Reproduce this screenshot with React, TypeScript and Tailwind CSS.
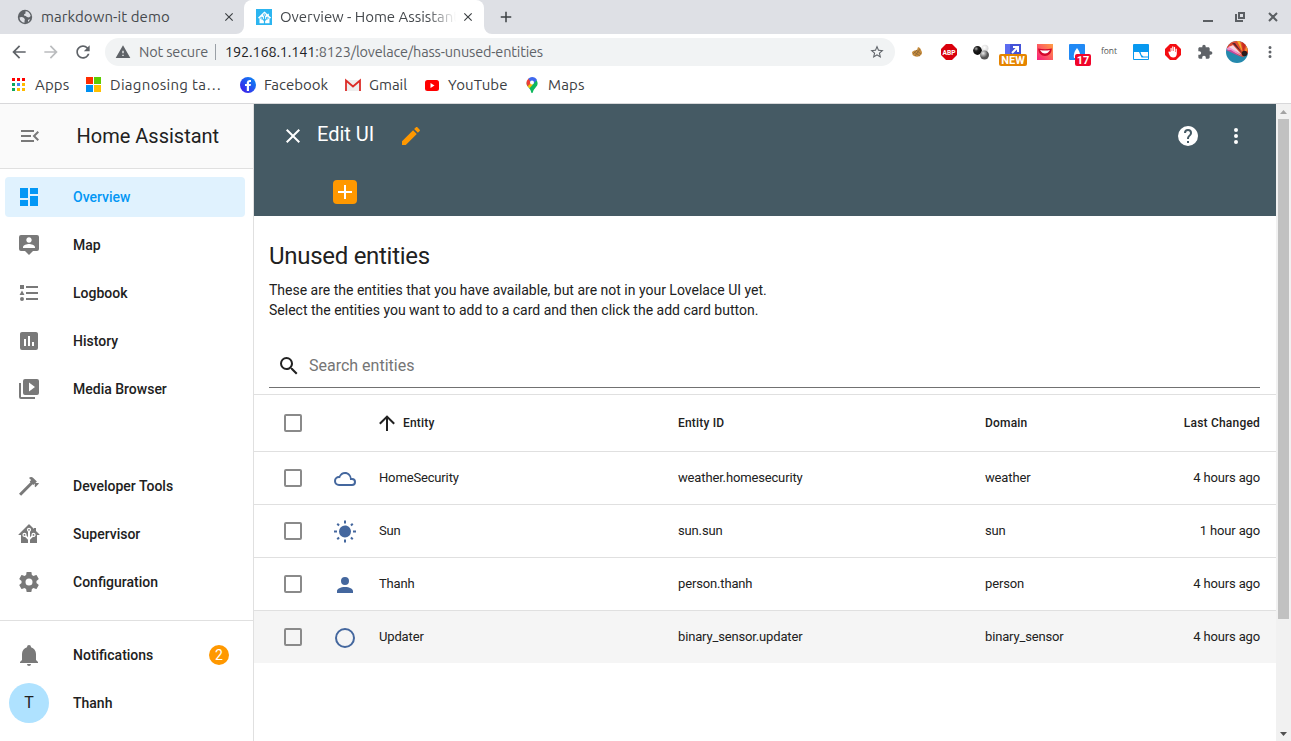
import type { ReactNode } from "react";

const mdi = {
  menuOpen: "M21,15.61L19.59,17L14.58,12L19.59,7L21,8.39L17.44,12L21,15.61M3,6H16V8H3V6M3,13V11H13V13H3M3,18V16H16V18H3Z",
  dashboard: "M13,3V9H21V3M13,21H21V11H13M3,21H11V15H3M3,13H11V3H3V13Z",
  tooltipAccount:
    "M20,2H4A2,2 0 0,0 2,4V16A2,2 0 0,0 4,18H8L12,22L16,18H20A2,2 0 0,0 22,16V4A2,2 0 0,0 20,2M12,4.3C13.5,4.3 14.7,5.5 14.7,7C14.7,8.5 13.5,9.7 12,9.7C10.5,9.7 9.3,8.5 9.3,7C9.3,5.5 10.5,4.3 12,4.3M18,15H6V14.1C6,12.1 10,11 12,11C14,11 18,12.1 18,14.1V15Z",
  list: "M5,9.5L7.5,14H2.5L5,9.5M3,4H7V8H3V4M5,20A2,2 0 0,0 7,18A2,2 0 0,0 5,16A2,2 0 0,0 3,18A2,2 0 0,0 5,20M9,5V7H21V5H9M9,19H21V17H9V19M9,13H21V11H9V13Z",
  pollBox: "M17,17H15V13H17M13,17H11V7H13M9,17H7V10H9M19,3H5C3.89,3 3,3.89 3,5V19A2,2 0 0,0 5,21H19A2,2 0 0,0 21,19V5C21,3.89 20.1,3 19,3Z",
  playBox: "M4,6H2V20A2,2 0 0,0 4,22H18V20H4V6M20,2H8A2,2 0 0,0 6,4V16A2,2 0 0,0 8,18H20A2,2 0 0,0 22,16V4A2,2 0 0,0 20,2M12,14.5V5.5L18,10L12,14.5Z",
  hammer:
    "M2,19.63L13.43,8.2L12.72,7.5L14.14,6.07L12,3.89C13.2,2.7 15.09,2.7 16.27,3.89L19.87,7.5L18.45,8.91H21.29L22,9.62L18.45,13.21L17.74,12.5V9.62L16.27,11.04L15.56,10.33L4.13,21.76L2,19.63Z",
  homeAssistant:
    "M21.8,13H20V21H13V17.67L15.79,14.88L16.5,15C17.66,15 18.6,14.06 18.6,12.9C18.6,11.74 17.66,10.8 16.5,10.8A2.1,2.1 0 0,0 14.4,12.9L14.5,13.61L13,15.13V9.65C13.66,9.29 14.1,8.6 14.1,7.8A2.1,2.1 0 0,0 12,5.7A2.1,2.1 0 0,0 9.9,7.8C9.9,8.6 10.34,9.29 11,9.65V15.13L9.5,13.61L9.6,12.9A2.1,2.1 0 0,0 7.5,10.8A2.1,2.1 0 0,0 5.4,12.9A2.1,2.1 0 0,0 7.5,15L8.21,14.88L11,17.67V21H4V13H2.25C1.83,13 1.42,13 1.42,12.79C1.43,12.57 1.85,12.15 2.28,11.72L11,3C11.33,2.67 11.67,2.33 12,2.33C12.33,2.33 12.67,2.67 13,3L17,7V6H19V9L21.78,11.78C22.18,12.18 22.59,12.59 22.6,12.8C22.6,13 22.2,13 21.8,13M7.5,12A0.9,0.9 0 0,1 8.4,12.9A0.9,0.9 0 0,1 7.5,13.8A0.9,0.9 0 0,1 6.6,12.9A0.9,0.9 0 0,1 7.5,12M16.5,12C17,12 17.4,12.4 17.4,12.9C17.4,13.4 17,13.8 16.5,13.8A0.9,0.9 0 0,1 15.6,12.9A0.9,0.9 0 0,1 16.5,12M12,6.9C12.5,6.9 12.9,7.3 12.9,7.8C12.9,8.3 12.5,8.7 12,8.7C11.5,8.7 11.1,8.3 11.1,7.8C11.1,7.3 11.5,6.9 12,6.9Z",
  cog: "M12,15.5A3.5,3.5 0 0,1 8.5,12A3.5,3.5 0 0,1 12,8.5A3.5,3.5 0 0,1 15.5,12A3.5,3.5 0 0,1 12,15.5M19.43,12.97C19.47,12.65 19.5,12.33 19.5,12C19.5,11.67 19.47,11.34 19.43,11L21.54,9.37C21.73,9.22 21.78,8.95 21.66,8.73L19.66,5.27C19.54,5.05 19.27,4.96 19.05,5.05L16.56,6.05C16.04,5.66 15.5,5.32 14.87,5.07L14.5,2.42C14.46,2.18 14.25,2 14,2H10C9.75,2 9.54,2.18 9.5,2.42L9.13,5.07C8.5,5.32 7.96,5.66 7.44,6.05L4.95,5.05C4.73,4.96 4.46,5.05 4.34,5.27L2.34,8.73C2.21,8.95 2.27,9.22 2.46,9.37L4.57,11C4.53,11.34 4.5,11.67 4.5,12C4.5,12.33 4.53,12.65 4.57,12.97L2.46,14.63C2.27,14.78 2.21,15.05 2.34,15.27L4.34,18.73C4.46,18.95 4.73,19.03 4.95,18.95L7.44,17.94C7.96,18.34 8.5,18.68 9.13,18.93L9.5,21.58C9.54,21.82 9.75,22 10,22H14C14.25,22 14.46,21.82 14.5,21.58L14.87,18.93C15.5,18.67 16.04,18.34 16.56,17.94L19.05,18.95C19.27,19.03 19.54,18.95 19.66,18.73L21.66,15.27C21.78,15.05 21.73,14.78 21.54,14.63L19.43,12.97Z",
  bell: "M21,19V20H3V19L5,17V11C5,7.9 7.03,5.17 10,4.29C10,4.19 10,4.1 10,4A2,2 0 0,1 12,2A2,2 0 0,1 14,4C14,4.1 14,4.19 14,4.29C16.97,5.17 19,7.9 19,11V17L21,19M14,21A2,2 0 0,1 12,23A2,2 0 0,1 10,21",
  close: "M19,6.41L17.59,5L12,10.59L6.41,5L5,6.41L10.59,12L5,17.59L6.41,19L12,13.41L17.59,19L19,17.59L13.41,12L19,6.41Z",
  pencil: "M20.71,7.04C21.1,6.65 21.1,6 20.71,5.63L18.37,3.29C18,2.9 17.35,2.9 16.96,3.29L15.12,5.12L18.87,8.87M3,17.25V21H6.75L17.81,9.93L14.06,6.18L3,17.25Z",
  plus: "M19,13H13V19H11V13H5V11H11V5H13V11H19V13Z",
  help: "M15.07,11.25L14.17,12.17C13.45,12.89 13,13.5 13,15H11V14.5C11,13.39 11.45,12.39 12.17,11.67L13.41,10.41C13.78,10.05 14,9.55 14,9C14,7.89 13.1,7 12,7A2,2 0 0,0 10,9H8A4,4 0 0,1 12,5A4,4 0 0,1 16,9C16,9.88 15.64,10.67 15.07,11.25M13,19H11V17H13M12,2A10,10 0 0,0 2,12A10,10 0 0,0 12,22A10,10 0 0,0 22,12C22,6.47 17.5,2 12,2Z",
  dots: "M12,16A2,2 0 0,1 14,18A2,2 0 0,1 12,20A2,2 0 0,1 10,18A2,2 0 0,1 12,16M12,10A2,2 0 0,1 14,12A2,2 0 0,1 12,14A2,2 0 0,1 10,12A2,2 0 0,1 12,10M12,4A2,2 0 0,1 14,6A2,2 0 0,1 12,8A2,2 0 0,1 10,6A2,2 0 0,1 12,4Z",
  magnify:
    "M9.5,3A6.5,6.5 0 0,1 16,9.5C16,11.11 15.41,12.59 14.44,13.73L14.71,14H15.5L20.5,19L19,20.5L14,15.5V14.71L13.73,14.44C12.59,15.41 11.11,16 9.5,16A6.5,6.5 0 0,1 3,9.5A6.5,6.5 0 0,1 9.5,3M9.5,5C7,5 5,7 5,9.5C5,12 7,14 9.5,14C12,14 14,12 14,9.5C14,7 12,5 9.5,5Z",
  arrowUp: "M13,20H11V8L5.5,13.5L4.08,12.08L12,4.16L19.92,12.08L18.5,13.5L13,8V20Z",
  cloud:
    "M6,19A5,5 0 0,1 1,14A5,5 0 0,1 6,9C7,6.65 9.3,5 12,5C15.43,5 18.24,7.66 18.5,11.03L19,11A4,4 0 0,1 23,15A4,4 0 0,1 19,19H6M19,13H17V12A5,5 0 0,0 12,7C9.5,7 7.45,8.82 7.06,11.19C6.73,11.07 6.37,11 6,11A3,3 0 0,0 3,14A3,3 0 0,0 6,17H19A2,2 0 0,0 21,15A2,2 0 0,0 19,13Z",
  sun: "M3.55,18.54L4.96,19.95L6.76,18.16L5.34,16.74M11,22.45C11.32,22.45 13,22.45 13,22.45V19.5H11M12,5.5A6,6 0 0,0 6,11.5A6,6 0 0,0 12,17.5A6,6 0 0,0 18,11.5C18,8.18 15.31,5.5 12,5.5M20,12.5H23V10.5H20M17.24,18.16L19.04,19.95L20.45,18.54L18.66,16.74M20.45,4.46L19.04,3.05L17.24,4.84L18.66,6.26M13,0.55H11V3.5H13M4,10.5H1V12.5H4M6.76,4.84L4.96,3.05L3.55,4.46L5.34,6.26L6.76,4.84Z",
  account: "M12,4A4,4 0 0,1 16,8A4,4 0 0,1 12,12A4,4 0 0,1 8,8A4,4 0 0,1 12,4M12,14C16.42,14 20,15.79 20,18V20H4V18C4,15.79 7.58,14 12,14Z",
  circle: "M12,20A8,8 0 0,1 4,12A8,8 0 0,1 12,4A8,8 0 0,1 20,12A8,8 0 0,1 12,20M12,2A10,10 0 0,0 2,12A10,10 0 0,0 12,22A10,10 0 0,0 22,12A10,10 0 0,0 12,2Z",
  back: "M20 11H7.83l5.59-5.59L12 4l-8 8 8 8 1.41-1.41L7.83 13H20v-2z",
  refresh:
    "M17.65 6.35C16.2 4.9 14.21 4 12 4c-4.42 0-7.99 3.58-7.99 8s3.57 8 7.99 8c3.73 0 6.84-2.55 7.73-6h-2.08c-.82 2.33-3.04 4-5.65 4-3.31 0-6-2.69-6-6s2.69-6 6-6c1.66 0 3.14.69 4.22 1.78L13 11h7V4l-2.35 2.35z",
  warning: "M1 21h22L12 2 1 21zm12-3h-2v-2h2v2zm0-4h-2v-4h2v4z",
  star: "M22 9.24l-7.19-.62L12 2 9.19 8.63 2 9.24l5.46 4.73L5.82 21 12 17.27 18.18 21l-1.63-7.03L22 9.24zM12 15.4l-3.76 2.27 1-4.28-3.32-2.88 4.38-.38L12 6.1l1.71 4.04 4.38.38-3.32 2.88 1 4.28L12 15.4z",
  extension:
    "M20.5 11H19V7c0-1.1-.9-2-2-2h-4V3.5C13 2.12 11.88 1 10.5 1S8 2.12 8 3.5V5H4c-1.1 0-1.99.9-1.99 2v3.8H3.5c1.49 0 2.7 1.21 2.7 2.7s-1.21 2.7-2.7 2.7H2V20c0 1.1.9 2 2 2h3.8v-1.5c0-1.49 1.21-2.7 2.7-2.7 1.49 0 2.7 1.21 2.7 2.7V22H17c1.1 0 2-.9 2-2v-4h1.5c1.38 0 2.5-1.12 2.5-2.5S21.88 11 20.5 11z",
};

function Icon({ d, className = "size-6" }: { d: string; className?: string }) {
  return (
    <svg viewBox="0 0 24 24" className={`shrink-0 fill-current ${className}`}>
      <path d={d} />
    </svg>
  );
}

function TabStrip() {
  return (
    <div className="flex h-[34px] bg-[#dee0e5] text-[15px] text-[#45494d]">
      <div className="flex w-[244px] items-center pl-4 pr-2">
        <svg viewBox="0 0 18 18" className="size-[18px] shrink-0">
          <circle cx="9" cy="9" r="7.2" fill="#5f6368" />
          <path
            d="M3.5 9.5Q6 8.5 8 10Q9.5 11.5 8.5 13V14.8Q4 14 3.5 9.5ZM9.5 3.3Q13.5 3.5 14.7 8L13 9.5L11 9Q10 7.5 8 7.5Q7.5 6 9.5 5.5ZM12 12L14 11Q13.5 13 12 14Z"
            fill="#dee0e5"
          />
        </svg>
        <span className="ml-[7px] flex-1 whitespace-nowrap tracking-[0.08px]">markdown-it demo</span>
        <Icon d={mdi.close} className="size-[14px] text-[#3c4043]" />
      </div>
      <div className="relative flex w-[240px] items-center rounded-t-lg bg-white pl-3 pr-[9px]">
        <svg viewBox="0 0 8 8" className="absolute -left-2 bottom-0 size-2 fill-white">
          <path d="M8 0V8H0A8 8 0 0 0 8 0Z" />
        </svg>
        <svg viewBox="0 0 8 8" className="absolute -right-2 bottom-0 size-2 fill-white">
          <path d="M0 0V8H8A8 8 0 0 1 0 0Z" />
        </svg>
        <span className="flex size-4 items-center justify-center bg-[#2cb5f0] text-white">
          <Icon d={mdi.homeAssistant} className="size-[15px]" />
        </span>
        <span className="ml-2 w-[176px] overflow-hidden whitespace-nowrap tracking-[-0.05px] [mask-image:linear-gradient(to_right,black_84%,transparent)]">
          Overview - Home Assistant
        </span>
        <Icon d={mdi.close} className="ml-auto size-[14px] text-[#3c4043]" />
      </div>
      <div className="flex flex-1 items-center pl-[13px] pr-[13px]">
        <Icon d={mdi.plus} className="size-[18px] text-[#3c4043]" />
        <svg viewBox="0 0 76 16" className="ml-auto h-4 w-[76px] fill-none stroke-[#5b5f63] stroke-2">
          <path d="M1 12H11M34 5V12H41M37 4h5v5h-5zM67 4l8 8M75 4l-8 8" />
        </svg>
      </div>
    </div>
  );
}

function Extensions() {
  return (
    <div className="flex items-center">
      <svg viewBox="0 0 16 16" className="size-4">
        <path d="M3 8Q5 6 8 6L9 3L11 4L12 6Q14 9 12 11Q9 14 5 12Q3 11 3 8Z" fill="#c58b3d" />
        <path d="M5 8l6 4M7 6l5 4M6 12l5-7M4 10l4-4" stroke="#8a6637" strokeWidth="0.8" />
      </svg>
      <svg viewBox="0 0 16 16" className="ml-4 size-4 overflow-visible">
        <path d="M5 0h6l5 5v6l-5 5H5l-5-5V5z" fill="#d9000c" />
        <text x="1.5" y="10.8" fontSize="8" fontWeight="700" fill="#fff" textLength="13" lengthAdjust="spacingAndGlyphs" fontFamily="Roboto, sans-serif">
          ABP
        </text>
      </svg>
      <svg viewBox="0 0 16 16" className="ml-4 size-4">
        <defs>
          <radialGradient id="dark" cx=".35" cy=".3">
            <stop stopColor="#aaa" />
            <stop offset=".5" stopColor="#222" />
            <stop offset="1" stopColor="#111" />
          </radialGradient>
          <radialGradient id="mid" cx=".35" cy=".3">
            <stop stopColor="#eee" />
            <stop offset="1" stopColor="#555" />
          </radialGradient>
          <radialGradient id="light" cx=".4" cy=".4">
            <stop stopColor="#fff" />
            <stop offset="1" stopColor="#ddd" />
          </radialGradient>
        </defs>
        <circle cx="12" cy="4.3" r="3.5" fill="url(#light)" />
        <circle cx="4.5" cy="6.5" r="4.4" fill="url(#dark)" />
        <circle cx="11.5" cy="11" r="4.5" fill="url(#mid)" />
      </svg>
      <div className="relative ml-4 size-4">
        <svg viewBox="0 0 16 16" className="size-4">
          <path d="M0 0h16v16H0z" fill="#4453d8" />
          <path d="M0 0h5v16H0z" fill="#5c6cf0" />
          <path d="M7 9l5-5M8 3h5v5" stroke="#fff" strokeWidth="2" fill="none" />
        </svg>
        <span className="absolute left-[-6px] top-[10px] flex h-3 w-7 items-center justify-center rounded-[2px] bg-[#e58400] font-['Roboto',sans-serif] text-[11px] font-bold leading-none text-white">
          NEW
        </span>
      </div>
      <svg viewBox="0 0 16 16" className="ml-4 size-4">
        <defs>
          <linearGradient id="smile" x1="0" y1="1" x2="1" y2="0">
            <stop stopColor="#fa1d7c" />
            <stop offset="1" stopColor="#ffa044" />
          </linearGradient>
        </defs>
        <path d="M0 0h16v16H0z" fill="url(#smile)" />
        <path d="M1 4.5Q8 6 15 4.5Q14 12 8 12Q2 12 1 4.5Z" fill="#d3082b" />
        <path d="M3 6Q8 7 13 6Q11 9.5 8 9.5Q5 9.5 3 6Z" fill="#fff" />
      </svg>
      <div className="relative ml-4 size-4">
        <svg viewBox="0 0 16 16" className="size-4">
          <rect width="16" height="16" rx="1" fill="#2089f5" />
          <path d="M8 4Q12 9 11 14H5Q4 9 8 4Z" fill="#fff" />
        </svg>
        <span className="absolute left-[6px] top-[10px] flex h-3 w-4 items-center justify-center rounded-[2px] bg-[#f0042a] font-['Roboto',sans-serif] text-[11px] font-bold leading-none text-white">
          17
        </span>
      </div>
      <span className="ml-4 flex h-4 w-4 items-start justify-center font-['Open_Sans',sans-serif] text-[8.5px] leading-[13px] text-[#555]">font</span>
      <svg viewBox="0 0 16 16" className="ml-4 size-4">
        <rect width="16" height="16" rx="1" fill="#0799f0" />
        <path d="M1 8H6L8.5 13.5H15V15H1ZM7.5 8h7.5v4.5H10.5Q8 11.5 7.5 8Z" fill="#fff" />
      </svg>
      <svg viewBox="0 0 16 16" className="ml-4 size-4">
        <path d="M5 0h6l5 5v6l-5 5H5l-5-5V5z" fill="#f40d12" />
        <path
          d="M5.5 8V4.2q.6-.8 1.2 0V7h.5V2.7q.6-.8 1.2 0V7h.5V3.2q.6-.8 1.2 0V8h.5V5q.6-.8 1.2 0V10q-.5 3.5-3.5 3.5T4 10L3.3 7.8q.9-.8 2.2.2Z"
          fill="#fff"
        />
      </svg>
      <Icon d={mdi.extension} className="ml-4 size-4 text-[#5f6368]" />
      <svg viewBox="0 0 22 22" className="ml-[13px] size-[22px]">
        <clipPath id="avatar">
          <circle cx="11" cy="11" r="11" />
        </clipPath>
        <g clipPath="url(#avatar)">
          <path d="M0 0h22v22H0z" fill="#2589ad" />
          <path d="M0 0H22V12L17 16Q10 14 0 7Z" fill="#e04a30" />
          <path d="M0 8L16 15L4 5Z" fill="#ef8fcd" />
          <path d="M3 6L16 14L7 4Z" fill="#f6d5e4" />
          <path d="M0 9L15 16L5 9Z" fill="#c64a9a" />
          <path d="M6 2L17 13L9 2Z" fill="#5a2430" />
          <path d="M11 0L17 12L14 0Z" fill="#f0b02b" />
          <path d="M16 1L17 12L20 3Z" fill="#c92c1a" />
          <path d="M21 4L18 12L22 9Z" fill="#f7912e" />
          <circle cx="18.5" cy="12.5" r="2.8" fill="#2b1a1a" />
        </g>
      </svg>
      <Icon d={mdi.dots} className="ml-[13px] size-[18px] text-[#5f6368]" />
    </div>
  );
}

function AddressBar() {
  return (
    <div className="flex h-9 items-center bg-white pl-[9px] pr-3">
      <Icon d={mdi.back} className="size-5 text-[#5f6368]" />
      <Icon d={mdi.back} className="ml-3 size-5 rotate-180 text-[#babcbe]" />
      <Icon d={mdi.refresh} className="ml-3 size-5 text-[#5f6368]" />
      <div className="ml-3 flex h-7 w-[790px] items-center rounded-full bg-[#f1f3f4] pl-[10px] pr-[10px] text-[14.5px] text-[#5f6368]">
        <Icon d={mdi.warning} className="size-4" />
        <span className="ml-2 w-[69px] whitespace-nowrap tracking-[-0.16px]">Not secure</span>
        <span className="mx-[7px] mr-[9px] h-4 w-px bg-[#9aa0a6]" />
        <span className="flex-1 whitespace-nowrap tracking-[-0.17px]">
          <span className="text-[#202124]">192.168.1.141</span>:8123/lovelace/hass-unused-entities
        </span>
        <Icon d={mdi.star} className="size-4" />
      </div>
      <div className="ml-auto">
        <Extensions />
      </div>
    </div>
  );
}

function Bookmark({ icon, label, className }: { icon: ReactNode; label: string; className: string }) {
  return (
    <div className={`flex items-center ${className}`}>
      {icon}
      <span className="whitespace-nowrap">{label}</span>
    </div>
  );
}

function BookmarksBar() {
  const dots = ["#f00", "#f00", "#f00", "#0da960", "#4285f4", "#fb0", "#0da960", "#fb0", "#fb0"];
  return (
    <div className="flex h-[34px] items-center border-b border-[#d8d8da] bg-white pb-[3px] pl-[10px] text-[15px] text-[#3c4043]">
      <Bookmark
        className="w-[75px] gap-[9px] tracking-[0.15px]"
        label="Apps"
        icon={
          <svg viewBox="0 0 16 16" className="size-4">
            {dots.map((c, i) => (
              <rect key={i} x={2 + (i % 3) * 5} y={1 + Math.floor(i / 3) * 5} width="3" height="3" fill={c} />
            ))}
          </svg>
        }
      />
      <Bookmark
        className="w-[155px] gap-[9px] tracking-[0.3px]"
        label="Diagnosing ta…"
        icon={
          <svg viewBox="0 0 16 16" className="size-4">
            <path d="M1 0h7v7H1z" fill="#ff2c00" />
            <path d="M9 0h7v7H9z" fill="#5dcc00" />
            <path d="M1 8h7v7H1z" fill="#0090f2" />
            <path d="M9 8h7v7H9z" fill="#ffc000" />
          </svg>
        }
      />
      <Bookmark
        className="w-[105px] gap-2"
        label="Facebook"
        icon={
          <svg viewBox="0 0 16 16" className="size-4">
            <defs>
              <linearGradient id="fb" x1="0" y1="1" x2="1" y2="0">
                <stop stopColor="#4413e8" />
                <stop offset="1" stopColor="#0790f5" />
              </linearGradient>
            </defs>
            <circle cx="8" cy="8" r="8" fill="url(#fb)" />
            <path d="M6.8 14V9H5V7h1.8V5.5Q7 3 9.5 3H11v2H9.8Q9 5 9 6v1h2l-.4 2H9v5z" fill="#fff" />
          </svg>
        }
      />
      <Bookmark
        className="w-[79px] gap-2"
        label="Gmail"
        icon={
          <svg viewBox="0 0 16 16" className="size-4">
            <path d="M1 3h14v11H1z" fill="#eee" />
            <path d="M1 14V3.5L8 9.5L15 3.5V14" fill="none" stroke="#dc2c27" strokeWidth="1.8" />
          </svg>
        }
      />
      <Bookmark
        className="w-[100px] gap-2 tracking-[0.1px]"
        label="YouTube"
        icon={
          <svg viewBox="0 0 16 16" className="size-4">
            <rect x="1" y="3" width="14" height="11" rx="2.5" fill="#f00" />
            <path d="M6.5 6v5L10.5 8.5z" fill="#fff" />
          </svg>
        }
      />
      <Bookmark
        className="gap-2 tracking-[0.15px]"
        label="Maps"
        icon={
          <svg viewBox="0 0 16 16" className="size-4">
            <path d="M3.5 9Q2.5 7.5 2.5 5.5L8 5.5L12.5 3Q15 7 12 10Q9.5 12.5 8.5 16H7.5Q7 13 3.5 9Z" fill="#0fb85d" />
            <path d="M2.5 6Q2.5 3.5 4.5 1.5L8 5L3.8 9.5Q2.5 8 2.5 6Z" fill="#ee3d35" />
            <path d="M3.7 9.3L7 6L9 7.5L5.5 11.3Z" fill="#fdbd0a" />
            <path d="M4.3 1.7Q6 0 8 0Q11.5 0 13 3L8.5 7.5L6 4Z" fill="#3f68ee" />
            <circle cx="8" cy="5.5" r="2" fill="#fff" />
          </svg>
        }
      />
    </div>
  );
}

function NavItem({ icon, label, active = false }: { icon: string; label: string; active?: boolean }) {
  const tone = active ? "bg-[#e0f2fe] text-[#0397f5]" : "text-[#212121]";
  return (
    <div className={`flex h-10 items-center rounded px-3 ${tone}`}>
      <Icon d={icon} className={active ? "size-6" : "size-6 text-[#797979]"} />
      <span className="ml-8">{label}</span>
    </div>
  );
}

function Sidebar() {
  return (
    <aside className="flex w-[254px] shrink-0 flex-col border-r border-[#e0e0e0] bg-white text-[14px] font-medium">
      <div className="flex h-[65px] items-center border-b border-[#e0e0e0] bg-[#fafafa] pl-[18px]">
        <Icon d={mdi.menuOpen} className="size-6 text-[#797979]" />
        <span className="ml-[34.5px] text-[20px] font-normal text-[#212121]">Home Assistant</span>
      </div>
      <nav className="flex w-[250px] flex-col gap-2 px-[5px] pt-2">
        <NavItem icon={mdi.dashboard} label="Overview" active />
        <NavItem icon={mdi.tooltipAccount} label="Map" />
        <NavItem icon={mdi.list} label="Logbook" />
        <NavItem icon={mdi.pollBox} label="History" />
        <NavItem icon={mdi.playBox} label="Media Browser" />
      </nav>
      <nav className="mt-auto flex w-[250px] flex-col gap-2 px-[5px] pb-[18px]">
        <NavItem icon={mdi.hammer} label="Developer Tools" />
        <NavItem icon={mdi.homeAssistant} label="Supervisor" />
        <NavItem icon={mdi.cog} label="Configuration" />
      </nav>
      <div className="flex h-[121px] flex-col gap-2 border-t border-[#e0e0e0] px-[5px] pt-[14px] text-[#212121]">
        <div className="flex h-10 items-center pl-3 pr-[19px]">
          <Icon d={mdi.bell} className="size-6 text-[#797979]" />
          <span className="ml-8 flex-1">Notifications</span>
          <span className="flex size-5 items-center justify-center rounded-full bg-[#ff9800] font-normal text-white">2</span>
        </div>
        <div className="flex h-10 items-center pl-1">
          <span className="flex size-10 items-center justify-center rounded-full bg-[#afe2ff] text-[16px] font-normal">T</span>
          <span className="ml-6">Thanh</span>
        </div>
      </div>
    </aside>
  );
}

const rows = [
  { icon: mdi.cloud, name: "HomeSecurity", id: "weather.homesecurity", domain: "weather", changed: "4 hours ago" },
  { icon: mdi.sun, name: "Sun", id: "sun.sun", domain: "sun", changed: "1 hour ago" },
  { icon: mdi.account, name: "Thanh", id: "person.thanh", domain: "person", changed: "4 hours ago" },
  { icon: mdi.circle, name: "Updater", id: "binary_sensor.updater", domain: "binary_sensor", changed: "4 hours ago" },
];

function Checkbox() {
  return <span className="size-[18px] rounded-[2px] border-2 border-[#8a8a8a]" />;
}

const gridCols = "grid grid-cols-[49px_46px_299px_307px_1fr_auto] items-center pl-[30px] pr-4";

function EntityTable() {
  return (
    <div className="text-[13px] tracking-[-0.15px] text-[#212121]">
      <div className={`${gridCols} h-[58px] border-y border-[#e0e0e0] text-[12px] font-medium tracking-[0.2px]`}>
        <Checkbox />
        <span />
        <span className="-ml-1 flex items-center">
          <Icon d={mdi.arrowUp} className="size-6" />
          <span className="ml-1">Entity</span>
        </span>
        <span>Entity ID</span>
        <span>Domain</span>
        <span>Last Changed</span>
      </div>
      {rows.map((r) => (
        <div key={r.id} className={`${gridCols} h-[53px] border-b border-[#e0e0e0] last:h-[52px] last:border-b-0 last:bg-[#f5f5f5]`}>
          <Checkbox />
          <Icon d={r.icon} className="mt-[2px] size-6 text-[#44679e]" />
          <span>{r.name}</span>
          <span>{r.id}</span>
          <span>{r.domain}</span>
          <span>{r.changed}</span>
        </div>
      ))}
    </div>
  );
}

function MainPanel() {
  return (
    <main className="flex min-w-0 flex-1 flex-col bg-white text-[#212121]">
      <header className="h-28 bg-[#455a64] text-white">
        <div className="flex h-16 items-center pl-[27px] pr-7">
          <Icon d={mdi.close} />
          <span className="ml-3 pb-1 text-[20px]">Edit UI</span>
          <Icon d={mdi.pencil} className="ml-[25px] size-6 text-[#ff9800]" />
          <Icon d={mdi.help} className="ml-auto size-6" />
          <Icon d={mdi.dots} className="ml-6 size-6" />
        </div>
        <div className="flex h-12 items-center pl-[79px]">
          <span className="flex size-6 items-center justify-center rounded-[4px] bg-[#ff9800]">
            <Icon d={mdi.plus} />
          </span>
        </div>
      </header>
      <section className="px-4 pl-[15px] pt-6">
        <h1 className="text-[24px] leading-8 tracking-[-0.288px]">Unused entities</h1>
        <p className="mt-2 text-[14px] leading-5">
          These are the entities that you have available, but are not in your Lovelace UI yet.
          <br />
          Select the entities you want to add to a card and then click the add card button.
        </p>
        <div className="mt-6 flex h-11 items-center border-b border-[#717171] pl-2 text-[16px]">
          <Icon d={mdi.magnify} />
          <span className="ml-2 text-[#757575]">Search entities</span>
        </div>
      </section>
      <div className="mt-1.5">
        <EntityTable />
      </div>
    </main>
  );
}

function Scrollbar() {
  return (
    <div className="flex w-[15px] shrink-0 flex-col items-center bg-[#f1f1f1]">
      <svg viewBox="0 0 15 15" className="h-[15px] w-[15px] fill-[#a3a3a3]">
        <path d="M4 10L7.5 6L11 10Z" />
      </svg>
      <div className="h-[500px] w-[11px] bg-[#c1c1c1]" />
      <svg viewBox="0 0 15 15" className="mt-auto h-[15px] w-[15px] fill-[#505050]">
        <path d="M4 6L7.5 10L11 6Z" />
      </svg>
    </div>
  );
}

export default function App() {
  return (
    <div className="flex h-[741px] w-[1291px] flex-col overflow-hidden bg-white">
      <div className="shrink-0 font-['Ubuntu','Noto_Sans',sans-serif]">
        <TabStrip />
        <AddressBar />
        <BookmarksBar />
      </div>
      <div className="flex min-h-0 flex-1 font-['Roboto',sans-serif]">
        <Sidebar />
        <MainPanel />
        <Scrollbar />
      </div>
    </div>
  );
}
